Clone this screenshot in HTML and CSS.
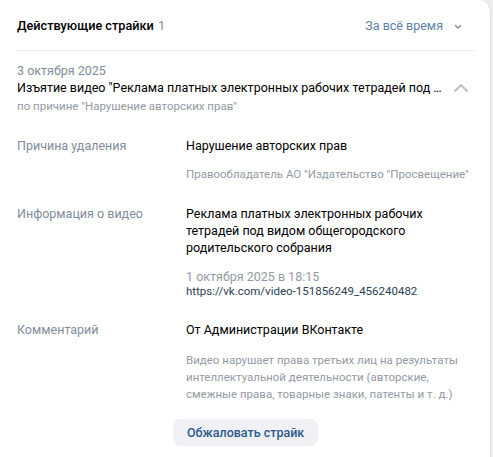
FILE: index.html
```html
<!DOCTYPE html>
<html lang="ru">
<head>
<meta charset="utf-8">
<link rel="stylesheet" href="styles.css">
</head>
<body>
<div class="card">
  <div class="header">
    <div class="title">Действующие страйки <span class="count">1</span></div>
    <div class="period">За всё время
      <svg class="chev-down" width="8" height="6" viewBox="0 0 8 6"><path d="M1.5 1.5 L4 4 L6.5 1.5" fill="none" stroke="#818c99" stroke-width="1.4" stroke-linecap="round" stroke-linejoin="round"/></svg>
    </div>
  </div>
  <div class="divider"></div>
  <div class="strike">
    <div class="strike-text">
      <div class="date">3 октября 2025</div>
      <div class="strike-title">Изъятие видео "Реклама платных электронных рабочих тетрадей под видом общегородского родительского собрания"</div>
      <div class="reason">по причине "Нарушение авторских прав"</div>
    </div>
    <svg class="chev-up" width="16" height="10" viewBox="0 0 16 10"><path d="M2 8 L8 2 L14 8" fill="none" stroke="#b4bcc6" stroke-width="1.8" stroke-linecap="round" stroke-linejoin="round"/></svg>
  </div>
  <div class="details">
    <div class="row">
      <div class="label">Причина удаления</div>
      <div class="value">
        <div class="main">Нарушение авторских прав</div>
        <div class="sub">Правообладатель АО "Издательство "Просвещение"</div>
      </div>
    </div>
    <div class="row">
      <div class="label">Информация о видео</div>
      <div class="value">
        <div class="main">Реклама платных электронных рабочих тетрадей под видом общегородского родительского собрания</div>
        <div class="video-date">1 октября 2025 в 18:15</div>
        <div class="link">https://vk.com/video-151856249_456240482</div>
      </div>
    </div>
    <div class="row">
      <div class="label">Комментарий</div>
      <div class="value">
        <div class="main">От Администрации ВКонтакте</div>
        <div class="sub comment">Видео нарушает права третьих лиц на результаты интеллектуальной деятельности (авторские, смежные права, товарные знаки, патенты и т. д.)</div>
      </div>
    </div>
    <div class="actions">
      <button class="btn">Обжаловать страйк</button>
    </div>
  </div>
</div>
</body>
</html>
```
FILE: styles.css
```css
html, body {
  margin: 0;
  padding: 0;
}
body {
  background: #edeef0;
  font-family: Roboto, "Noto Sans", Arial, sans-serif;
  color: #000;
}
.card {
  width: 491px;
  height: 457px;
  background: #fff;
  border-right: 1px solid #dce1e6;
  border-top-right-radius: 12px;
  box-sizing: border-box;
}
.header {
  height: 50px;
  display: flex;
  align-items: center;
  justify-content: space-between;
  padding: 0 28px 0 17px;
}
.title {
  font-size: 12.7px;
  font-weight: 500;
  color: #000;
}
.count {
  font-weight: 400;
  color: #818c99;
  margin-left: 1px;
}
.period {
  font-size: 12.5px;
  color: #5d7fa6;
  display: flex;
  align-items: center;
  gap: 11px;
  padding-top: 1px;
}
.chev-down {
  display: block;
  margin-top: 2px;
}
.divider {
  height: 1px;
  background: #e7e8ec;
  margin: 0 16px;
}
.strike {
  display: flex;
  align-items: center;
  padding: 11px 21px 0 17px;
  gap: 10px;
}
.strike-text {
  flex: 1;
  min-width: 0;
}
.date {
  font-size: 12.5px;
  color: #818c99;
  line-height: 17px;
}
.strike-title {
  font-size: 12.5px;
  line-height: 18px;
  white-space: nowrap;
  overflow: hidden;
  text-overflow: ellipsis;
  color: #000;
}
.reason {
  font-size: 11.5px;
  color: #939aa3;
  line-height: 16px;
  margin-top: 1px;
}
.chev-up {
  display: block;
  flex: none;
}
.details {
  padding: 23px 17px 0 17px;
}
.row {
  display: flex;
  margin-bottom: 22px;
}
.label {
  width: 169px;
  flex: none;
  font-size: 12.5px;
  color: #818c99;
  line-height: 17px;
}
.value {
  flex: 1;
  min-width: 0;
}
.main {
  font-size: 12.5px;
  line-height: 17px;
  color: #000;
  max-width: 250px;
}
.sub {
  font-size: 11.5px;
  line-height: 17px;
  color: #939aa3;
  margin-top: 12px;
}
.video-date {
  font-size: 12.5px;
  margin-top: 14px;
  line-height: 14px;
  color: #939aa3;
}
.link {
  font-size: 11.5px;
  line-height: 15px;
  color: #2c3e55;
}
.comment {
  max-width: 285px;
  margin-top: 14px;
}
.actions {
  padding-left: 156px;
  margin-top: -6px;
}
.btn {
  font-family: inherit;
  border: none;
  background: #eff1f4;
  color: #2c5a8a;
  font-size: 12.5px;
  font-weight: 500;
  height: 27px;
  padding: 0 14px;
  border-radius: 8px;
  cursor: pointer;
}
```
